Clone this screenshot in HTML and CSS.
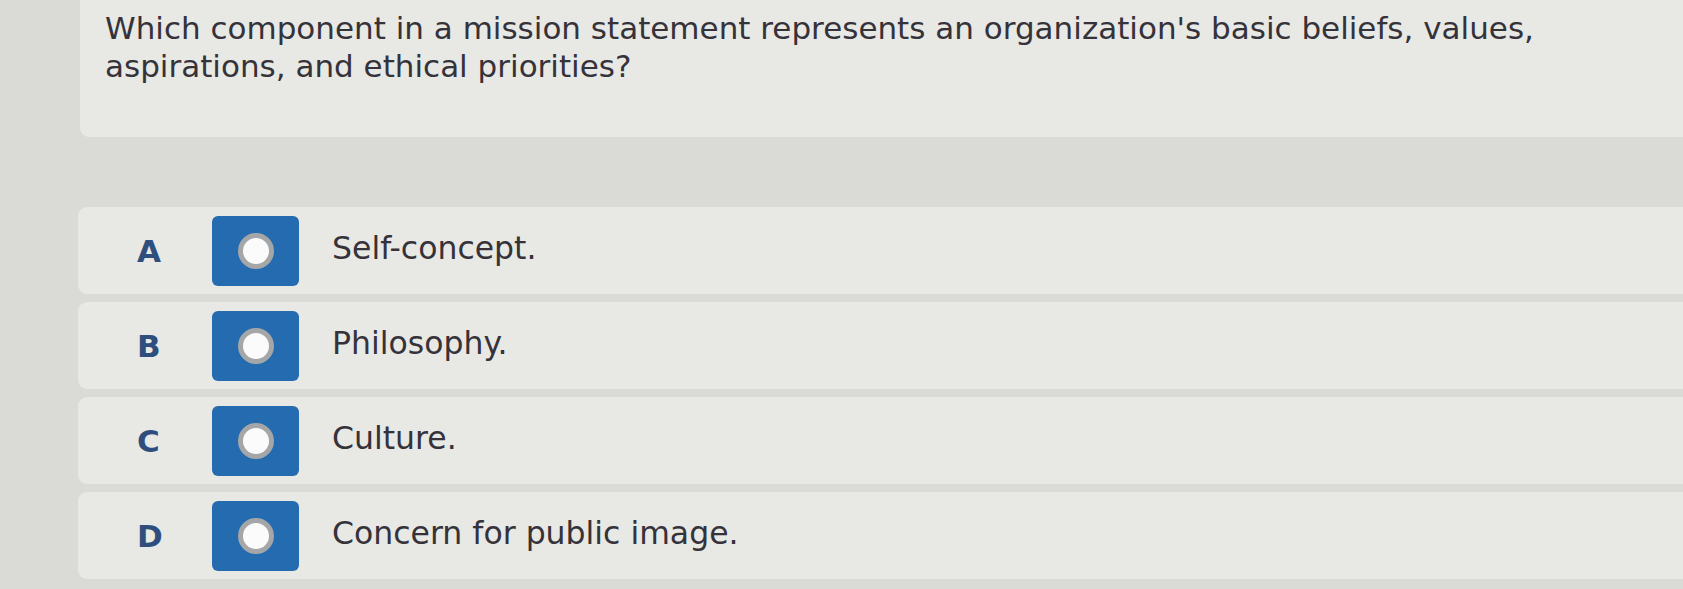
FILE: index.html
```html
<!DOCTYPE html>
<html lang="en">
<head>
<meta charset="utf-8">
<title>Question</title>
<link rel="stylesheet" href="styles.css">
</head>
<body>
<main class="page">
  <section class="question">
    <p class="prompt">Which component in a mission statement represents an organization's basic beliefs, values, aspirations, and ethical priorities?</p>
  </section>
  <ul class="choices">
    <li class="choice">
      <span class="letter">A</span>
      <span class="radio-btn"><span class="dot"></span></span>
      <span class="label">Self-concept.</span>
    </li>
    <li class="choice">
      <span class="letter">B</span>
      <span class="radio-btn"><span class="dot"></span></span>
      <span class="label">Philosophy.</span>
    </li>
    <li class="choice">
      <span class="letter">C</span>
      <span class="radio-btn"><span class="dot"></span></span>
      <span class="label">Culture.</span>
    </li>
    <li class="choice">
      <span class="letter">D</span>
      <span class="radio-btn"><span class="dot"></span></span>
      <span class="label">Concern for public image.</span>
    </li>
  </ul>
</main>
</body>
</html>
```

FILE: styles.css
```css
html, body {
  margin: 0;
  padding: 0;
  background: #dadad7;
  overflow: hidden;
}

.page {
  width: 1683px;
  height: 589px;
  display: flex;
  flex-direction: column;
  font-family: "DejaVu Sans", Verdana, sans-serif;
  color: #35323a;
}

.question {
  margin-left: 80px;
  height: 137px;
  box-sizing: border-box;
  padding: 9px 98px 0 25px;
  background: #e8e8e5;
  border-bottom-left-radius: 9px;
}

.prompt {
  margin: 0;
  font-size: 31px;
  line-height: 38px;
}

.choices {
  list-style: none;
  margin: 70px 0 0 78px;
  padding: 0;
  display: flex;
  flex-direction: column;
  gap: 8px;
}

.choice {
  height: 87px;
  display: flex;
  align-items: center;
  background: #e8e8e5;
  border-radius: 9px 0 0 9px;
}

.letter {
  width: 134px;
  box-sizing: border-box;
  padding-left: 59px;
  font-weight: bold;
  font-size: 31px;
  color: #2e4e7e;
}

.radio-btn {
  width: 87px;
  height: 70px;
  border-radius: 6px;
  background: #246bb0;
  display: flex;
  align-items: center;
  justify-content: center;
  flex: none;
}

.dot {
  width: 26px;
  height: 26px;
  border-radius: 50%;
  background: #fbfbfb;
  border: 5px solid #a4a6a8;
}

.label {
  margin-left: 33px;
  margin-bottom: 6px;
  font-size: 31.5px;
}
```
